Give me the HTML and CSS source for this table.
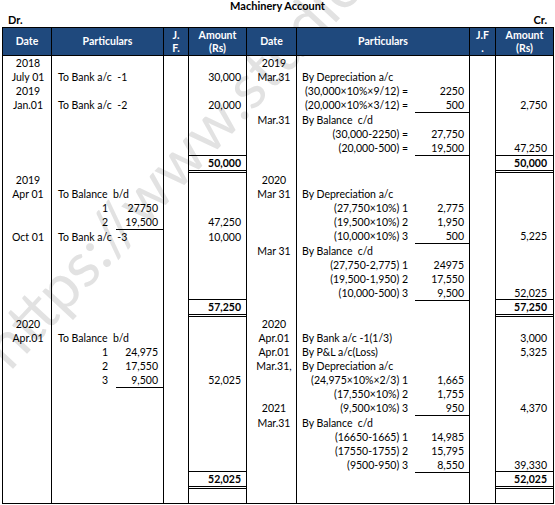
FILE: index.html
```html
<!DOCTYPE html>
<html>
<head>
<meta charset="utf-8">
<title>Machinery Account</title>
<link rel="stylesheet" href="styles.css">
</head>
<body>
<div class="page">
  <div class="watermark">https://www.studiestoday.com</div>
  <div class="title">Machinery Account</div>
  <div class="drcr"><span>Dr.</span><span>Cr.</span></div>
  <div class="ledger">
    <!-- header -->
    <div class="h">Date</div>
    <div class="h">Particulars</div>
    <div class="h">J.<br>F.</div>
    <div class="h">Amount<br>(Rs)</div>
    <div class="h">Date</div>
    <div class="h">Particulars</div>
    <div class="h">J.F<br>.</div>
    <div class="h">Amount<br>(Rs)</div>

    <!-- section 1 -->
    <div class="d dl">
      <div class="ln">2018</div>
      <div class="ln">July 01</div>
      <div class="ln">2019</div>
      <div class="ln">Jan.01</div>
    </div>
    <div class="p pl">
      <div class="ln"></div>
      <div class="ln t">To Bank a/c  -1</div>
      <div class="ln"></div>
      <div class="ln t">To Bank a/c  -2</div>
    </div>
    <div class="j"></div>
    <div class="a al">
      <div class="ln"></div>
      <div class="ln">30,000</div>
      <div class="ln"></div>
      <div class="ln">20,000</div>
    </div>
    <div class="d dr">
      <div class="ln">2019</div>
      <div class="ln">Mar.31</div>
      <div class="ln"></div>
      <div class="ln u"></div>
      <div class="ln">Mar.31</div>
    </div>
    <div class="p pr">
      <div class="ln"></div>
      <div class="ln t">By Depreciation a/c</div>
      <div class="ln sub"><span>(30,000×10%×9/12) =</span><span class="v">2250</span></div>
      <div class="ln sub u"><span>(20,000×10%×3/12) =</span><span class="v">500</span></div>
      <div class="ln t">By Balance  c/d</div>
      <div class="ln sub"><span>(30,000-2250) =</span><span class="v">27,750</span></div>
      <div class="ln sub u"><span>(20,000-500) =</span><span class="v">19,500</span></div>
    </div>
    <div class="j"></div>
    <div class="a ar">
      <div class="ln"></div>
      <div class="ln"></div>
      <div class="ln"></div>
      <div class="ln u">2,750</div>
      <div class="ln"></div>
      <div class="ln"></div>
      <div class="ln">47,250</div>
    </div>

    <!-- section 1 totals -->
    <div></div><div></div><div></div>
    <div class="tot al">50,000</div>
    <div></div><div></div><div></div>
    <div class="tot ar">50,000</div>

    <!-- section 2 -->
    <div class="d dl">
      <div class="ln">2019</div>
      <div class="ln">Apr 01</div>
      <div class="ln"></div>
      <div class="ln u"></div>
      <div class="ln">Oct 01</div>
    </div>
    <div class="p pl">
      <div class="ln"></div>
      <div class="ln t">To Balance  b/d</div>
      <div class="ln sub"><span>1</span><span class="v">27750</span></div>
      <div class="ln sub u"><span>2</span><span class="v">19,500</span></div>
      <div class="ln t">To Bank a/c  -3</div>
    </div>
    <div class="j"></div>
    <div class="a al">
      <div class="ln"></div>
      <div class="ln"></div>
      <div class="ln"></div>
      <div class="ln u">47,250</div>
      <div class="ln">10,000</div>
    </div>
    <div class="d dr">
      <div class="ln">2020</div>
      <div class="ln">Mar 31</div>
      <div class="ln"></div>
      <div class="ln"></div>
      <div class="ln u"></div>
      <div class="ln">Mar 31</div>
    </div>
    <div class="p pr">
      <div class="ln"></div>
      <div class="ln t">By Depreciation a/c</div>
      <div class="ln sub"><span>(27,750×10%) 1</span><span class="v">2,775</span></div>
      <div class="ln sub"><span>(19,500×10%) 2</span><span class="v">1,950</span></div>
      <div class="ln sub u"><span>(10,000×10%) 3</span><span class="v">500</span></div>
      <div class="ln t">By Balance  c/d</div>
      <div class="ln sub"><span>(27,750-2,775) 1</span><span class="v">24975</span></div>
      <div class="ln sub"><span>(19,500-1,950) 2</span><span class="v">17,550</span></div>
      <div class="ln sub u"><span>(10,000-500) 3</span><span class="v">9,500</span></div>
    </div>
    <div class="j"></div>
    <div class="a ar">
      <div class="ln"></div>
      <div class="ln"></div>
      <div class="ln"></div>
      <div class="ln"></div>
      <div class="ln u">5,225</div>
      <div class="ln"></div>
      <div class="ln"></div>
      <div class="ln"></div>
      <div class="ln">52,025</div>
    </div>

    <!-- section 2 totals -->
    <div></div><div></div><div></div>
    <div class="tot al">57,250</div>
    <div></div><div></div><div></div>
    <div class="tot ar">57,250</div>

    <!-- section 3 -->
    <div class="d dl">
      <div class="ln">2020</div>
      <div class="ln">Apr.01</div>
    </div>
    <div class="p pl">
      <div class="ln"></div>
      <div class="ln t">To Balance  b/d</div>
      <div class="ln sub"><span>1</span><span class="v">24,975</span></div>
      <div class="ln sub"><span>2</span><span class="v">17,550</span></div>
      <div class="ln sub u"><span>3</span><span class="v">9,500</span></div>
    </div>
    <div class="j"></div>
    <div class="a al">
      <div class="ln"></div>
      <div class="ln"></div>
      <div class="ln"></div>
      <div class="ln"></div>
      <div class="ln">52,025</div>
    </div>
    <div class="d dr">
      <div class="ln">2020</div>
      <div class="ln">Apr.01</div>
      <div class="ln">Apr.01</div>
      <div class="ln">Mar.31,</div>
      <div class="ln"></div>
      <div class="ln"></div>
      <div class="ln u">2021</div>
      <div class="ln">Mar.31</div>
    </div>
    <div class="p pr">
      <div class="ln"></div>
      <div class="ln t">By Bank a/c -1(1/3)</div>
      <div class="ln t">By P&amp;L a/c(Loss)</div>
      <div class="ln t">By Depreciation a/c</div>
      <div class="ln sub"><span>(24,975×10%×2/3) 1</span><span class="v">1,665</span></div>
      <div class="ln sub"><span>(17,550×10%) 2</span><span class="v">1,755</span></div>
      <div class="ln sub u"><span>(9,500×10%) 3</span><span class="v">950</span></div>
      <div class="ln t">By Balance  c/d</div>
      <div class="ln sub"><span>(16650-1665) 1</span><span class="v">14,985</span></div>
      <div class="ln sub"><span>(17550-1755) 2</span><span class="v">15,795</span></div>
      <div class="ln sub u"><span>(9500-950) 3</span><span class="v">8,550</span></div>
    </div>
    <div class="j"></div>
    <div class="a ar">
      <div class="ln"></div>
      <div class="ln">3,000</div>
      <div class="ln">5,325</div>
      <div class="ln"></div>
      <div class="ln"></div>
      <div class="ln"></div>
      <div class="ln u">4,370</div>
      <div class="ln"></div>
      <div class="ln"></div>
      <div class="ln"></div>
      <div class="ln">39,330</div>
    </div>

    <!-- section 3 totals -->
    <div></div><div></div><div></div>
    <div class="tot al">52,025</div>
    <div></div><div></div><div></div>
    <div class="tot ar">52,025</div>

    <!-- closing empty row -->
    <div></div><div></div><div></div><div></div>
    <div></div><div></div><div></div><div></div>
  </div>
</div>
</body>
</html>
```
FILE: styles.css
```css
html {
  background: #fff;
}

body {
  margin: 0;
  padding: 0;
  font-family: Lato, "Liberation Sans", sans-serif;
  font-size: 10.5px;
  color: #000;
}

.page {
  position: relative;
  z-index: 0;
  width: 555px;
  height: 505px;
  overflow: hidden;
}

.watermark {
  position: absolute;
  left: 10px;
  top: 317px;
  font-size: 62px;
  line-height: 62px;
  white-space: nowrap;
  color: #e2e2e2;
  transform-origin: 0 55px;
  transform: rotate(-47deg);
  z-index: -1;
}

.title {
  height: 12px;
  line-height: 12px;
  text-align: center;
  font-weight: bold;
  font-size: 11px;
}

.drcr {
  display: flex;
  justify-content: space-between;
  height: 15px;
  line-height: 15px;
  margin: 0 2px;
  padding: 0 6px;
  font-weight: bold;
  font-size: 11px;
}

.ledger {
  margin-left: 2px;
  width: 552px;
  box-sizing: border-box;
  display: grid;
  grid-template-columns: 49px 112px 25px 58px 50px 173px 26px 57px;
  grid-template-rows: 28px 99px 18px 126px 18px 154px 18px 14px;
  border: 1px solid #000;
}

.ledger > div {
  box-sizing: border-box;
  border-right: 1px solid #000;
  min-width: 0;
}

.ledger > div:nth-child(8n) {
  border-right: none;
}

.h {
  background: #1f497d;
  color: #fff;
  font-weight: bold;
  font-size: 10.5px;
  line-height: 13px;
  display: flex;
  align-items: center;
  justify-content: center;
  text-align: center;
  border-bottom: 1px solid #000;
}

.ln {
  height: 14px;
  line-height: 14px;
  white-space: pre;
}

.ln.u {
  height: 15px;
}

.d {
  text-align: center;
}

.dl {
  padding-left: 2px;
}

.dr {
  padding-left: 5px;
}

.pl .t {
  padding-left: 6px;
}

.pr .t {
  padding-left: 5px;
}

.sub {
  display: grid;
  text-align: right;
}

.pl .sub {
  grid-template-columns: 1fr 47px;
  column-gap: 8px;
}

.pr .sub {
  grid-template-columns: 1fr 54px;
  column-gap: 7px;
}

.sub .v {
  padding-right: 5px;
  height: 14px;
}

.sub.u .v {
  border-bottom: 1px solid #000;
}

.a {
  text-align: right;
}

.al {
  padding-right: 5px;
}

.ar {
  padding-right: 6px;
}

.tot {
  border-top: 1px solid #000;
  border-bottom: 3px double #000;
  line-height: 14px;
  text-align: right;
  font-weight: bold;
}
```
